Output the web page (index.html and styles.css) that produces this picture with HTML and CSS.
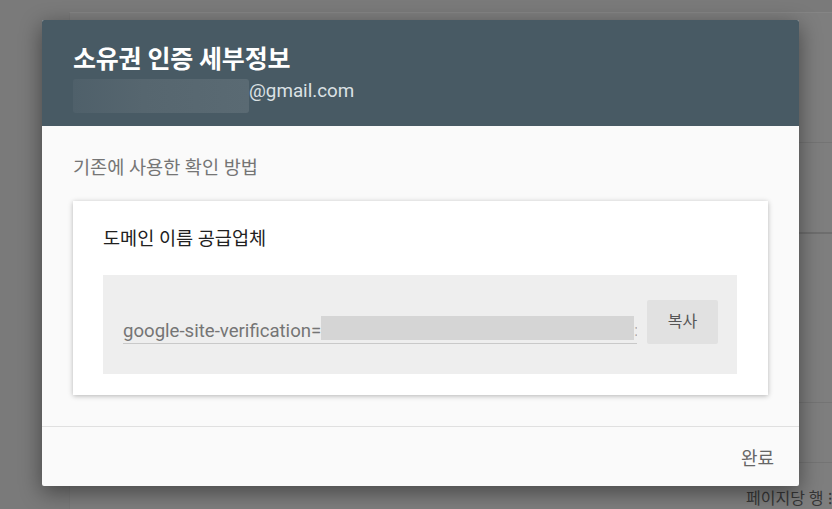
FILE: index.html
```html
<!DOCTYPE html>
<html lang="ko">
<head>
<meta charset="utf-8">
<title>소유권 인증 세부정보</title>
<link rel="stylesheet" href="styles.css">
</head>
<body>
<div class="page">
  <div class="panel">
    <div class="row r1"></div>
    <div class="row r2"></div>
    <div class="row r3"></div>
    <div class="row r4"></div>
    <div class="pager">페이지당 행 ⁝</div>
  </div>
</div>

<div class="dialog">
  <div class="header">
    <div class="title">소유권 인증 세부정보</div>
    <div class="email"><span class="blur-email"></span><span class="domain">@gmail.com</span></div>
  </div>
  <div class="body">
    <div class="subtitle">기존에 사용한 확인 방법</div>
    <div class="card">
      <div class="card-title">도메인 이름 공급업체</div>
      <div class="record">
        <div class="field">
          <span class="prefix">google-site-verification=</span><span class="blur-code"></span><span class="tail">:</span>
        </div>
        <button class="copy">복사</button>
      </div>
    </div>
  </div>
  <div class="footer">
    <button class="done">완료</button>
  </div>
</div>
</body>
</html>
```

FILE: styles.css
```css
* { box-sizing: border-box; }
html, body {
  margin: 0;
  width: 832px;
  height: 509px;
  overflow: hidden;
}
body {
  background: #7a7a7a;
  font-family: Roboto, "Noto Sans CJK KR", sans-serif;
  position: relative;
}
.page {
  display: flex;
  height: 509px;
  padding: 12px 0 0 69px;
}
.panel {
  flex: 1;
  background: #7e7e7e;
  border-top: 1px solid #858585;
  border-left: 1px solid #777;
  position: relative;
  display: flex;
  flex-direction: column;
}
.row {
  border-bottom: 1px solid #747474;
}
.r1 { height: 130px; }
.r2 { height: 91px; border-bottom: 2px solid #6e6e6e; }
.r3 { height: 170px; }
.r4 { height: 60px; }
.pager {
  margin-top: 26px;
  margin-left: 676px;
  font-size: 16px;
  line-height: 20px;
  color: #363636;
  white-space: nowrap;
}

.dialog {
  position: absolute;
  left: 42px;
  top: 20px;
  width: 757px;
  height: 466px;
  background: #fafafa;
  border-radius: 2px;
  box-shadow: 0 6px 22px rgba(0,0,0,0.45);
  display: flex;
  flex-direction: column;
  overflow: hidden;
}
.header {
  background: #485a64;
  height: 106px;
  padding: 25px 31px 0;
}
.title {
  color: #fff;
  font-size: 25px;
  font-weight: 700;
  line-height: 30px;
  letter-spacing: -0.2px;
}
.email {
  margin-top: 4px;
  display: flex;
  align-items: flex-start;
  height: 34px;
}
.blur-email {
  width: 176px;
  height: 34px;
  border-radius: 3px;
  background: linear-gradient(90deg, #4f606a 0%, #56666f 40%, #5a6a73 100%);
}
.domain {
  color: #dbe1e4;
  font-size: 18.8px;
  line-height: 24px;
}
.body {
  flex: 1;
  padding: 30px 31px 0;
}
.subtitle {
  font-size: 18.6px;
  line-height: 24px;
  color: #757575;
}
.card {
  margin-top: 21px;
  width: 695px;
  height: 194px;
  background: #fff;
  box-shadow: 0 1px 5px rgba(0,0,0,0.28);
  padding: 26px 30px 0;
}
.card-title {
  font-size: 18.6px;
  line-height: 24px;
  color: #212121;
}
.record {
  margin-top: 24px;
  width: 634px;
  height: 99px;
  background: #eeeeee;
  display: flex;
  align-items: flex-end;
  gap: 10px;
  padding: 0 19px 30px 20px;
}
.field {
  width: 514px;
  height: 28px;
  display: flex;
  align-items: flex-end;
  border-bottom: 1px solid #c9c9c9;
  padding-bottom: 1px;
  overflow: hidden;
}
.prefix {
  font-size: 18.6px;
  line-height: 22px;
  color: #757575;
  white-space: nowrap;
}
.blur-code {
  width: 313px;
  height: 24px;
  background: #d5d5d5;
  align-self: flex-start;
  flex-shrink: 0;
}
.tail {
  font-size: 16px;
  line-height: 22px;
  color: #aaa;
}
.copy {
  width: 71px;
  height: 44px;
  border: none;
  border-radius: 2px;
  background: #e1e1e1;
  color: #555;
  font-family: Roboto, "Noto Sans CJK KR", sans-serif;
  font-size: 16px;
  padding: 0;
  line-height: 40px;
}
.footer {
  height: 60px;
  border-top: 1px solid #e0e0e0;
  display: flex;
  justify-content: flex-end;
  align-items: center;
  padding-right: 17px;
}
.done {
  border: none;
  background: transparent;
  color: #666;
  font-family: Roboto, "Noto Sans CJK KR", sans-serif;
  font-size: 18px;
  padding: 0 8px;
  height: 36px;
}
```
